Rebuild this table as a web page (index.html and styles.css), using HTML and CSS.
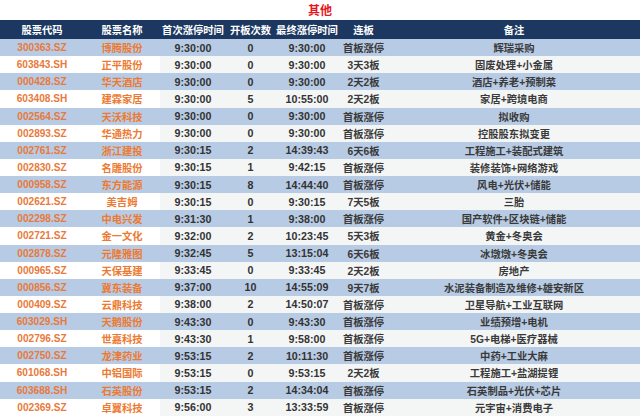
FILE: index.html
```html
<!DOCTYPE html>
<html lang="zh">
<head>
<meta charset="utf-8">
<title>其他</title>
<link rel="stylesheet" href="styles.css">
</head>
<body>
<div class="sheet">
  <div class="title">其他</div>
  <div class="row head">
    <div>股票代码</div><div>股票名称</div><div>首次涨停时间</div><div>开板次数</div><div>最终涨停时间</div><div>连板</div><div>备注</div>
  </div>
  <div class="row odd"><div class="code">300363.SZ</div><div class="name">博腾股份</div><div class="num">9:30:00</div><div class="num">0</div><div class="num">9:30:00</div><div class="cn">首板涨停</div><div class="cn">辉瑞采购</div></div>
  <div class="row even"><div class="code">603843.SH</div><div class="name">正平股份</div><div class="num">9:30:00</div><div class="num">0</div><div class="num">9:30:00</div><div class="cn">3天3板</div><div class="cn">固废处理+小金属</div></div>
  <div class="row odd"><div class="code">000428.SZ</div><div class="name">华天酒店</div><div class="num">9:30:00</div><div class="num">0</div><div class="num">9:30:00</div><div class="cn">2天2板</div><div class="cn">酒店+养老+预制菜</div></div>
  <div class="row even"><div class="code">603408.SH</div><div class="name">建霖家居</div><div class="num">9:30:00</div><div class="num">5</div><div class="num">10:55:00</div><div class="cn">2天2板</div><div class="cn">家居+跨境电商</div></div>
  <div class="row odd"><div class="code">002564.SZ</div><div class="name">天沃科技</div><div class="num">9:30:00</div><div class="num">0</div><div class="num">9:30:00</div><div class="cn">首板涨停</div><div class="cn">拟收购</div></div>
  <div class="row even"><div class="code">002893.SZ</div><div class="name">华通热力</div><div class="num">9:30:00</div><div class="num">0</div><div class="num">9:30:00</div><div class="cn">首板涨停</div><div class="cn">控股股东拟变更</div></div>
  <div class="row odd"><div class="code">002761.SZ</div><div class="name">浙江建投</div><div class="num">9:30:15</div><div class="num">2</div><div class="num">14:39:43</div><div class="cn">6天6板</div><div class="cn">工程施工+装配式建筑</div></div>
  <div class="row even"><div class="code">002830.SZ</div><div class="name">名雕股份</div><div class="num">9:30:15</div><div class="num">1</div><div class="num">9:42:15</div><div class="cn">首板涨停</div><div class="cn">装修装饰+网络游戏</div></div>
  <div class="row odd"><div class="code">000958.SZ</div><div class="name">东方能源</div><div class="num">9:30:15</div><div class="num">8</div><div class="num">14:44:40</div><div class="cn">首板涨停</div><div class="cn">风电+光伏+储能</div></div>
  <div class="row even"><div class="code">002621.SZ</div><div class="name">美吉姆</div><div class="num">9:30:15</div><div class="num">0</div><div class="num">9:30:15</div><div class="cn">7天5板</div><div class="cn">三胎</div></div>
  <div class="row odd"><div class="code">002298.SZ</div><div class="name">中电兴发</div><div class="num">9:31:30</div><div class="num">1</div><div class="num">9:38:00</div><div class="cn">首板涨停</div><div class="cn">国产软件+区块链+储能</div></div>
  <div class="row even"><div class="code">002721.SZ</div><div class="name">金一文化</div><div class="num">9:32:00</div><div class="num">2</div><div class="num">10:23:45</div><div class="cn">5天3板</div><div class="cn">黄金+冬奥会</div></div>
  <div class="row odd"><div class="code">002878.SZ</div><div class="name">元隆雅图</div><div class="num">9:32:45</div><div class="num">5</div><div class="num">13:15:04</div><div class="cn">6天6板</div><div class="cn">冰墩墩+冬奥会</div></div>
  <div class="row even"><div class="code">000965.SZ</div><div class="name">天保基建</div><div class="num">9:33:45</div><div class="num">0</div><div class="num">9:33:45</div><div class="cn">2天2板</div><div class="cn">房地产</div></div>
  <div class="row odd"><div class="code">000856.SZ</div><div class="name">冀东装备</div><div class="num">9:37:00</div><div class="num">10</div><div class="num">14:55:09</div><div class="cn">9天7板</div><div class="cn">水泥装备制造及维修+雄安新区</div></div>
  <div class="row even"><div class="code">000409.SZ</div><div class="name">云鼎科技</div><div class="num">9:38:00</div><div class="num">2</div><div class="num">14:50:07</div><div class="cn">首板涨停</div><div class="cn">卫星导航+工业互联网</div></div>
  <div class="row odd"><div class="code">603029.SH</div><div class="name">天鹅股份</div><div class="num">9:43:30</div><div class="num">0</div><div class="num">9:43:30</div><div class="cn">首板涨停</div><div class="cn">业绩预增+电机</div></div>
  <div class="row even"><div class="code">002796.SZ</div><div class="name">世嘉科技</div><div class="num">9:43:30</div><div class="num">1</div><div class="num">9:58:00</div><div class="cn">首板涨停</div><div class="cn">5G+电梯+医疗器械</div></div>
  <div class="row odd"><div class="code">002750.SZ</div><div class="name">龙津药业</div><div class="num">9:53:15</div><div class="num">2</div><div class="num">10:11:30</div><div class="cn">首板涨停</div><div class="cn">中药+工业大麻</div></div>
  <div class="row even"><div class="code">601068.SH</div><div class="name">中铝国际</div><div class="num">9:53:15</div><div class="num">0</div><div class="num">9:53:15</div><div class="cn">2天2板</div><div class="cn">工程施工+盐湖提锂</div></div>
  <div class="row odd"><div class="code">603688.SH</div><div class="name">石英股份</div><div class="num">9:53:15</div><div class="num">2</div><div class="num">14:34:04</div><div class="cn">首板涨停</div><div class="cn">石英制品+光伏+芯片</div></div>
  <div class="row even"><div class="code">002369.SZ</div><div class="name">卓翼科技</div><div class="num">9:56:00</div><div class="num">3</div><div class="num">13:33:59</div><div class="cn">首板涨停</div><div class="cn">元宇宙+消费电子</div></div>
</div>
</body>
</html>
```

FILE: styles.css
```css
html, body {
  margin: 0;
  padding: 0;
  background: #ffffff;
}

.sheet {
  width: 640px;
  height: 416px;
  overflow: hidden;
  font-family: "Liberation Sans", "Noto Sans CJK SC", sans-serif;
}

.title {
  height: 19.5px;
  line-height: 20px;
  text-align: center;
  color: #e8141b;
  font-family: "Noto Sans CJK SC", sans-serif;
  font-weight: 700;
  font-size: 12px;
}

.row {
  display: grid;
  grid-template-columns: 84px 76px 66px 49px 64px 49px 1fr;
  height: 17.14px;
  align-items: center;
}

.row > div {
  height: 100%;
  display: flex;
  align-items: center;
  justify-content: center;
  white-space: nowrap;
}

.head {
  height: 19.5px;
  background: #1c3861;
  color: #ffffff;
  font-family: "Noto Sans CJK SC", sans-serif;
  font-weight: 700;
  font-size: 10.3px;
}

.odd {
  background: #b8cbe4;
}

.even {
  background: #ffffff;
}

.even > div:nth-child(n+3) {
  background: #f4f6f6;
}

.code {
  color: #e9793a;
  font-family: "Liberation Sans", sans-serif;
  font-weight: 700;
  font-size: 10.1px;
}

.name {
  color: #ec7a32;
  font-family: "Noto Sans CJK SC", sans-serif;
  font-weight: 700;
  font-size: 10.3px;
}

.num {
  color: #333333;
  font-family: "Liberation Sans", sans-serif;
  font-weight: 700;
  font-size: 10.7px;
}

.cn {
  color: #3a3a3a;
  font-family: "Liberation Sans", "Noto Sans CJK SC", sans-serif;
  font-weight: 700;
  font-size: 10.3px;
}
```
